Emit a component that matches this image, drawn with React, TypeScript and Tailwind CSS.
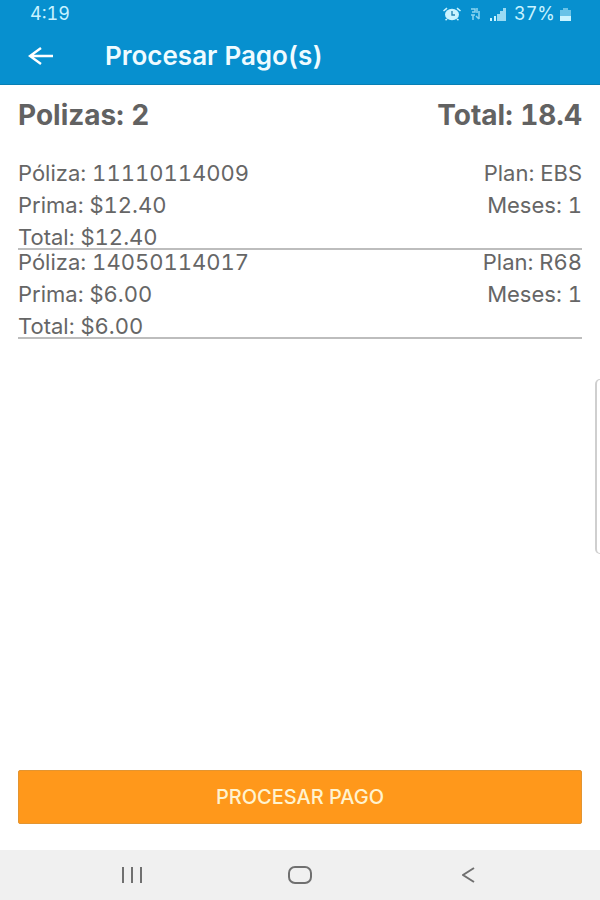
import type { ReactNode } from "react"

const policies = [
  { id: "11110114009", plan: "EBS", premium: "$12.40", months: 1, total: "$12.40" },
  { id: "14050114017", plan: "R68", premium: "$6.00", months: 1, total: "$6.00" },
]

const StatusBar = () => (
  <div className="flex h-7 items-center justify-between pl-[30px] pr-7 text-[#c9f3ff]">
    <span className="text-lg leading-7">4:19</span>
    <div className="flex items-center">
      {/* Alarm */}
      <svg width="20" height="14" viewBox="0 0 20 14" aria-hidden="true">
        <ellipse cx="10" cy="7.5" rx="7" ry="5.8" fill="currentColor" />
        <path d="M1.5 4 5 1.2M18.5 4 15 1.2M5 12 3.5 13.2M15 12l1.5 1.2" stroke="currentColor" strokeWidth="1.6" />
        <path d="M10 4v4h3" fill="none" stroke="#2787b5" strokeWidth="1.4" />
      </svg>
      {/* Mobile data */}
      <svg width="12" height="14" viewBox="0 0 12 14" className="ml-[7px] opacity-70" aria-hidden="true">
        <path d="M2 2h4v3H3M8 1v5M10 4v8M7 9l3 3M2 8h4M4 8v5" fill="none" stroke="currentColor" strokeWidth="1.5" />
      </svg>
      {/* Signal */}
      <svg width="17" height="13" viewBox="0 0 17 13" className="ml-2" aria-hidden="true">
        <path d="M1 10h2v3H1zM5 8h2v5H5z" fill="currentColor" />
        <path d="M8 6h3v7H8zM11 3h3v10h-3zM14 0h3v13h-3z" fill="currentColor" opacity=".75" />
      </svg>
      <span className="ml-2 text-lg leading-7">37%</span>
      {/* Battery */}
      <svg width="13" height="13" viewBox="0 0 13 13" className="ml-1" aria-hidden="true">
        <path d="M4 0h5v2h3v6H1V2h3z" fill="currentColor" opacity=".5" />
        <path d="M1 8h11v5H1z" fill="currentColor" />
      </svg>
    </div>
  </div>
)

const NavButton = ({ label, children }: { label: string; children: ReactNode }) => (
  <button type="button" aria-label={label} className="flex h-full w-14 items-center justify-center">
    {children}
  </button>
)

export default function App() {
  return (
    <div className="relative flex min-h-screen flex-col bg-white font-[Inter,Roboto,sans-serif] text-[#666] tabular-nums">
      <header className="border-b border-[#087fb4] bg-[#0790cf]">
        <StatusBar />
        <div className="flex h-14 items-center pl-7">
          <button type="button" aria-label="Volver" className="text-white">
            <svg width="25" height="20" viewBox="0 0 25 20" fill="none" stroke="currentColor" strokeWidth="2.4">
              <path d="M25 10H2M13 2 2 10l11 8" />
            </svg>
          </button>
          <h1 className="ml-[52px] text-[26px] leading-8 font-semibold text-[#effbff]">Procesar Pago(s)</h1>
        </div>
      </header>

      <main className="flex flex-1 flex-col px-[18px] pb-[26px]">
        <div className="flex justify-between pt-3 text-[28px] leading-9 font-bold text-[#626262]">
          <h2>Polizas: 2</h2>
          <p>Total: 18.4</p>
        </div>

        <ul className="mt-7 text-[22px] leading-[22px]">
          {policies.map((policy) => (
            <li key={policy.id} className="flex flex-col gap-[10px] border-b-2 border-[#bdbdbd] pt-px">
              <div className="flex justify-between">
                <span>Póliza: {policy.id}</span>
                <span>Plan: {policy.plan}</span>
              </div>
              <div className="flex justify-between">
                <span>Prima: {policy.premium}</span>
                <span>Meses: {policy.months}</span>
              </div>
              <div>Total: {policy.total}</div>
            </li>
          ))}
        </ul>

        <button
          type="button"
          className="mt-auto h-[54px] w-full rounded-xs border border-[#e39531] bg-[#ff981b] text-xl font-medium text-[#fff3cf]"
        >
          PROCESAR PAGO
        </button>
      </main>

      <nav className="flex h-[50px] items-center justify-center gap-28 bg-[#f0f0f0] text-[#707070]">
        <NavButton label="Recientes">
          <svg width="24" height="16" viewBox="0 0 24 16" stroke="currentColor" strokeWidth="2">
            <path d="M3 0v16M12 0v16M21 0v16" />
          </svg>
        </NavButton>
        <NavButton label="Inicio">
          <svg width="24" height="18" viewBox="0 0 24 18" fill="none" stroke="currentColor" strokeWidth="2">
            <rect x="1" y="1" width="22" height="16" rx="6" />
          </svg>
        </NavButton>
        <NavButton label="Atrás">
          <svg width="13" height="16" viewBox="0 0 13 16" fill="none" stroke="currentColor" strokeWidth="2">
            <path d="M12 1 1 8l11 7" />
          </svg>
        </NavButton>
      </nav>

      {/* Edge panel handle */}
      <div className="absolute top-[379px] right-0 h-[175px] w-[5px] rounded-l-md border-y border-l-2 border-[#cfcfcf] bg-white" />
    </div>
  )
}
